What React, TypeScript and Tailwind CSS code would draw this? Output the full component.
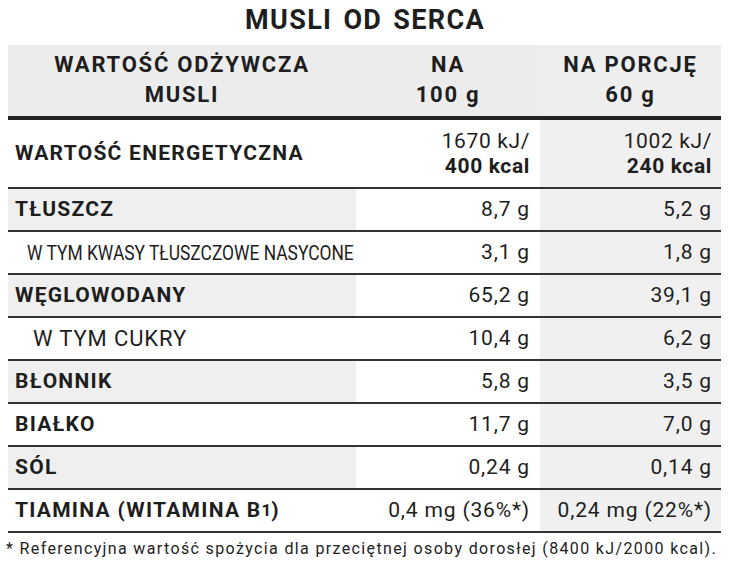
import React from "react";

interface IROW {
  label: React.ReactNode;
  per100: React.ReactNode;
  perPortion: React.ReactNode;
  shaded?: boolean;
  kind?: "bold" | "sub" | "subCondensed";
}

const ROWS: IROW[] = [
  { label: "TŁUSZCZ", per100: "8,7 g", perPortion: "5,2 g", shaded: true, kind: "bold" },
  {
    label: "W TYM KWASY TŁUSZCZOWE NASYCONE",
    per100: "3,1 g",
    perPortion: "1,8 g",
    kind: "subCondensed",
  },
  { label: "WĘGLOWODANY", per100: "65,2 g", perPortion: "39,1 g", shaded: true, kind: "bold" },
  { label: "W TYM CUKRY", per100: "10,4 g", perPortion: "6,2 g", kind: "sub" },
  { label: "BŁONNIK", per100: "5,8 g", perPortion: "3,5 g", shaded: true, kind: "bold" },
  { label: "BIAŁKO", per100: "11,7 g", perPortion: "7,0 g", kind: "bold" },
  { label: "SÓL", per100: "0,24 g", perPortion: "0,14 g", shaded: true, kind: "bold" },
  {
    label: (
      <>
        TIAMINA (WITAMINA B<span className="text-[17px] tracking-normal">1</span>)
      </>
    ),
    per100: "0,4 mg (36%*)",
    perPortion: "0,24 mg (22%*)",
    kind: "bold",
  },
];

const labelClass = (kind: IROW["kind"]) => {
  if (kind === "sub") return "pl-[25px] font-normal text-[22px] tracking-[0.04em]";
  if (kind === "subCondensed") return "pl-[19px] font-normal text-[20px]";
  return "pl-[7px] font-bold text-[21px] tracking-[0.06em]";
};

const App: React.FC = () => {
  return (
    <div
      className="w-[730px] h-[568px] bg-white text-[#1e1e1e] overflow-hidden"
      style={{ fontFamily: "Roboto, 'Noto Sans', sans-serif" }}
    >
      <h1 className="h-[45px] pt-[3px] text-center text-[27px] font-bold tracking-[0.05em] [word-spacing:3px] leading-[34px]">
        MUSLI OD SERCA
      </h1>
      <div className="ml-[8px] w-[713px]">
        {/* header */}
        <div className="grid grid-cols-[348px_184px_181px] h-[75px] bg-[#ececec] border-b-[4px] border-[#222] font-bold text-[22px] leading-[30px] tracking-[0.08em] text-center">
          <div className="flex flex-col justify-center pb-[2px]">
            <span>WARTOŚĆ ODŻYWCZA</span>
            <span>MUSLI</span>
          </div>
          <div className="flex flex-col justify-center pb-[2px]">
            <span>NA</span>
            <span>100 g</span>
          </div>
          <div className="flex flex-col justify-center pb-[2px] bg-[#eeeeee]">
            <span>NA PORCJĘ</span>
            <span>60 g</span>
          </div>
        </div>

        {/* energy */}
        <div className="grid grid-cols-[348px_184px_181px] h-[69px] border-b-2 border-[#333]">
          <div className="flex items-center pl-[7px] font-bold text-[21px] tracking-[0.06em]">
            WARTOŚĆ ENERGETYCZNA
          </div>
          <div className="flex flex-col justify-center items-end pr-[10px] text-[21px] leading-[25px] tracking-[0.03em]">
            <span>1670 kJ/</span>
            <span className="font-bold">400 kcal</span>
          </div>
          <div className="flex flex-col justify-center items-end pr-[9px] bg-[#f0f0f0] text-[21px] leading-[25px] tracking-[0.03em]">
            <span>1002 kJ/</span>
            <span className="font-bold">240 kcal</span>
          </div>
        </div>

        {ROWS.map((row, i) => (
          <div
            key={i}
            className="grid grid-cols-[348px_184px_181px] h-[43px] border-b-2 border-[#333]"
          >
            <div
              className={
                "flex items-center whitespace-nowrap " +
                (row.shaded ? "bg-[#efefef] " : "") +
                labelClass(row.kind)
              }
            >
              {row.kind === "subCondensed" ? (
                <span className="inline-block origin-left scale-x-[0.87]">{row.label}</span>
              ) : (
                row.label
              )}
            </div>
            <div className="flex items-center justify-end pr-[10px] text-[21px] tracking-[0.04em] whitespace-nowrap">
              {row.per100}
            </div>
            <div className="flex items-center justify-end pr-[9px] bg-[#f0f0f0] text-[21px] tracking-[0.04em] whitespace-nowrap">
              {row.perPortion}
            </div>
          </div>
        ))}
      </div>
      <p className="pl-[6px] pt-[4px] text-[16px] tracking-[0.085em] whitespace-nowrap text-[#222]">
        * Referencyjna wartość spożycia dla przeciętnej osoby dorosłej (8400 kJ/2000 kcal).
      </p>
    </div>
  );
};

export default App;
